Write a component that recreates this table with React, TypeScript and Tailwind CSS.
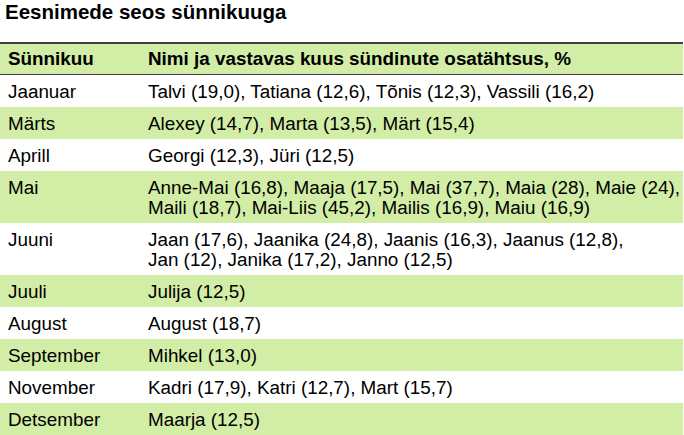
import React from 'react';

// lines are split where the original table breaks them
const rows: { month: string; lines: string[] }[] = [
  { month: 'Jaanuar', lines: ['Talvi (19,0), Tatiana (12,6), Tõnis (12,3), Vassili (16,2)'] },
  { month: 'Märts', lines: ['Alexey (14,7), Marta (13,5), Märt (15,4)'] },
  { month: 'Aprill', lines: ['Georgi (12,3), Jüri (12,5)'] },
  {
    month: 'Mai',
    lines: [
      'Anne-Mai (16,8), Maaja (17,5), Mai (37,7), Maia (28), Maie (24),',
      'Maili (18,7), Mai-Liis (45,2), Mailis (16,9), Maiu (16,9)',
    ],
  },
  {
    month: 'Juuni',
    lines: [
      'Jaan (17,6), Jaanika (24,8), Jaanis (16,3), Jaanus (12,8),',
      'Jan (12), Janika (17,2), Janno (12,5)',
    ],
  },
  { month: 'Juuli', lines: ['Julija (12,5)'] },
  { month: 'August', lines: ['August (18,7)'] },
  { month: 'September', lines: ['Mihkel (13,0)'] },
  { month: 'November', lines: ['Kadri (17,9), Katri (12,7), Mart (15,7)'] },
  { month: 'Detsember', lines: ['Maarja (12,5)'] },
];

const App: React.FC = () => {
  return (
    <div
      className="w-[684px] h-[435px] overflow-hidden bg-white text-black"
      style={{ fontFamily: '"Liberation Sans", Arial, sans-serif' }}
    >
      <h1 className="pl-[5px] text-[20.5px] leading-[24px] font-bold">Eesnimede seos sünnikuuga</h1>

      <table className="mt-[18px] w-[683px] border-collapse text-[18.85px]">
        <thead>
          <tr className="bg-[#d2eda5] border-t-2 border-b border-[#404040]">
            <th className="w-[140px] pl-[8px] pt-[5px] pb-[5px] text-left font-bold leading-[20px]">Sünnikuu</th>
            <th className="pl-[8px] pt-[5px] pb-[5px] text-left font-bold leading-[20px]">
              Nimi ja vastavas kuus sündinute osatähtsus, %
            </th>
          </tr>
        </thead>
        <tbody>
          {rows.map((r, i) => (
            <tr key={r.month} className={i % 2 === 1 ? 'bg-[#d2eda5]' : 'bg-white'}>
              <td className="pl-[8px] pt-[7px] pb-[5px] align-top leading-[20px] whitespace-nowrap">{r.month}</td>
              <td className="pl-[8px] pt-[7px] pb-[5px] align-top leading-[20px] whitespace-nowrap">
                {r.lines.map(line => (
                  <div key={line}>{line}</div>
                ))}
              </td>
            </tr>
          ))}
        </tbody>
      </table>
    </div>
  );
};

export default App;
